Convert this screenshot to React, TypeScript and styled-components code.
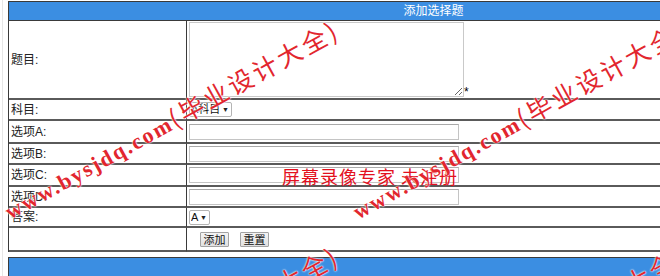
import React from 'react';
import styled, { createGlobalStyle } from 'styled-components';

const GlobalStyle = createGlobalStyle`
  html, body {
    margin: 0;
    padding: 0;
    overflow: hidden;
    background: #fff;
  }
  body {
    font-family: "Liberation Sans", "Noto Sans CJK SC", sans-serif;
    font-size: 12px;
    color: #222;
  }
`;

const Page = styled.div`
  position: relative;
  width: 660px;
  height: 276px;
  overflow: hidden;
  box-sizing: border-box;
  padding: 1px 0 0 8px;
`;

const EdgeLine = styled.div`
  position: absolute;
  left: 2px;
  top: 0;
  bottom: 0;
  width: 1px;
  background: #e6e6e6;
`;

const FormTable = styled.table`
  width: 850px;
  table-layout: fixed;
  border-collapse: separate;
  border-spacing: 0;
  border-top: 1px solid #3a3a3a;
  border-left: 1px solid #3a3a3a;
`;

const LabelCol = styled.col`
  width: 178px;
`;

const ValueCol = styled.col`
  width: auto;
`;

const Row = styled.tr<{ $h: number }>`
  height: ${p => p.$h}px;
`;

const HeadCell = styled.td`
  background: #3b8ee2;
  color: #fff;
  text-align: center;
  font-size: 12px;
  line-height: 16px;
  padding: 0;
  border-bottom: 1px solid #3a3a3a;
`;

const LabelCell = styled.td`
  padding: 0 0 0 2px;
  border-right: 1px solid #3a3a3a;
  border-bottom: 2px solid #5a5a5a;
  vertical-align: middle;
  line-height: 14px;
  color: #222;
`;

const ValueCell = styled.td<{ $top?: boolean }>`
  padding: ${p => (p.$top ? '1px 0 0 2px' : '0 0 0 2px')};
  border-bottom: 2px solid #5a5a5a;
  vertical-align: ${p => (p.$top ? 'top' : 'middle')};
  line-height: 0;
`;

const TextArea = styled.textarea`
  box-sizing: border-box;
  width: 275px;
  height: 75px;
  border: 1px solid #c9c9c9;
  padding: 0;
  margin: 0;
  vertical-align: bottom;
  font-family: inherit;
`;

const Required = styled.span`
  display: inline-block;
  font-size: 12px;
  line-height: 10px;
  vertical-align: bottom;
  color: #000;
`;

const TextInput = styled.input`
  box-sizing: border-box;
  width: 270px;
  height: 16px;
  border: 1px solid #c4c4c4;
  border-top-color: #a9a9a9;
  padding: 0;
  margin: 0;
  vertical-align: middle;
`;

const SelectBox = styled.span`
  display: inline-flex;
  align-items: center;
  gap: 1px;
  box-sizing: border-box;
  height: 15px;
  padding: 0 2px 0 1px;
  border: 1px solid #b4b4b4;
  border-radius: 2px;
  background: #fff;
  vertical-align: middle;
  line-height: 13px;
`;

const PlainSelect = styled.select`
  appearance: none;
  border: none;
  background: transparent;
  padding: 0;
  margin: 0;
  font-family: "Liberation Sans", "Noto Sans CJK SC", sans-serif;
  font-size: 11px;
  color: #111;
  height: 13px;
  line-height: 13px;
  outline: none;
`;

const Caret = styled.span`
  font-size: 7px;
  color: #222;
`;

const Buttons = styled.div`
  display: flex;
  gap: 11px;
  padding-left: 11px;
  line-height: 14px;
`;

const Button = styled.button`
  box-sizing: border-box;
  height: 15px;
  width: 29px;
  padding: 0;
  border: 1px solid #a3a3a3;
  border-radius: 1px;
  background: linear-gradient(#f4f4f4, #e1e1e1);
  font-family: "Noto Sans CJK SC", sans-serif;
  font-size: 11px;
  line-height: 12px;
  color: #111;
`;

const FooterBar = styled.div`
  margin-top: 5px;
  width: 850px;
  height: 22px;
  background: #3b8ee2;
  border-top: 1px solid #3a3a3a;
  border-left: 1px solid #3a3a3a;
`;

const Mark = styled.div<{ $x: number; $y: number }>`
  position: absolute;
  left: ${p => p.$x}px;
  top: ${p => p.$y}px;
  transform-origin: 0 50%;
  transform: rotate(-29deg);
  white-space: nowrap;
  pointer-events: none;
  font-family: "Liberation Serif", serif;
  font-weight: bold;
  font-size: 22px;
  line-height: 30px;
  letter-spacing: 2px;
  color: #e2262e;
  text-shadow: 0 0 2px #fff, 0 0 2px #fff;
`;

const MarkCjk = styled.span`
  font-family: "Noto Sans CJK SC", sans-serif;
  font-weight: 400;
  font-size: 25px;
  letter-spacing: 3px;
`;

const RecNotice = styled.div`
  position: absolute;
  left: 282px;
  top: 164px;
  pointer-events: none;
  font-family: "Noto Sans CJK SC", sans-serif;
  font-size: 18px;
  line-height: 24px;
  letter-spacing: 1px;
  color: #e3101e;
  white-space: nowrap;
`;

const marks = [
  { x: 6, y: 195 },
  { x: 354, y: 195 },
  { x: 6, y: 421 },
  { x: 354, y: 421 },
];

const options = ['选项A', '选项B', '选项C', '选项D'];
const optionHeights = [23, 21, 22, 21];

export default function App() {
  return (
    <Page>
      <GlobalStyle />
      <EdgeLine />
      <FormTable>
        <colgroup>
          <LabelCol />
          <ValueCol />
        </colgroup>
        <tbody>
          <Row $h={19}>
            <HeadCell colSpan={2}>添加选择题</HeadCell>
          </Row>
          <Row $h={79}>
            <LabelCell>题目:</LabelCell>
            <ValueCell $top>
              <TextArea />
              <Required>*</Required>
            </ValueCell>
          </Row>
          <Row $h={21}>
            <LabelCell>科目:</LabelCell>
            <ValueCell>
              <SelectBox>
                <PlainSelect defaultValue="A">
                  <option value="A">A科目</option>
                </PlainSelect>
                <Caret>▼</Caret>
              </SelectBox>
            </ValueCell>
          </Row>
          {options.map((o, i) => (
            <Row key={o} $h={optionHeights[i]}>
              <LabelCell>{o}:</LabelCell>
              <ValueCell>
                <TextInput type="text" />
              </ValueCell>
            </Row>
          ))}
          <Row $h={20}>
            <LabelCell>答案:</LabelCell>
            <ValueCell>
              <SelectBox>
                <PlainSelect defaultValue="A">
                  <option value="A">A</option>
                  <option value="B">B</option>
                  <option value="C">C</option>
                  <option value="D">D</option>
                </PlainSelect>
                <Caret>▼</Caret>
              </SelectBox>
            </ValueCell>
          </Row>
          <Row $h={24}>
            <LabelCell />
            <ValueCell>
              <Buttons>
                <Button>添加</Button>
                <Button>重置</Button>
              </Buttons>
            </ValueCell>
          </Row>
        </tbody>
      </FormTable>
      <FooterBar />

      <RecNotice>屏幕录像专家 未注册</RecNotice>
      {marks.map(m => (
        <Mark key={`${m.x}-${m.y}`} $x={m.x} $y={m.y}>
          www.bysjdq.com<MarkCjk>(毕业设计大全)</MarkCjk>
        </Mark>
      ))}
    </Page>
  );
}
